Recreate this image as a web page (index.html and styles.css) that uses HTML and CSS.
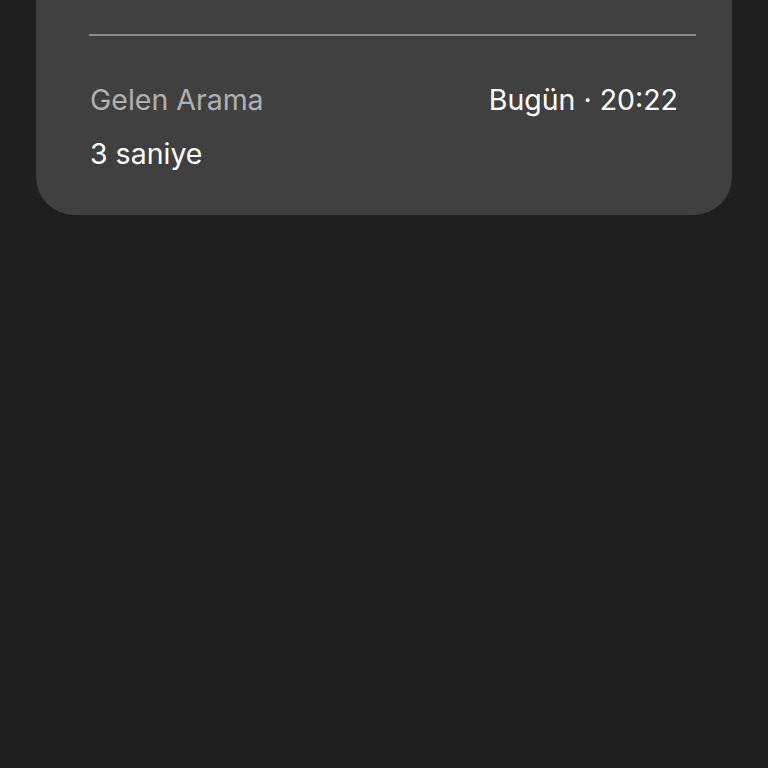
FILE: index.html
```html
<!DOCTYPE html>
<html lang="tr">
<head>
  <meta charset="UTF-8">
  <title>Arama Detayı</title>
  <meta name="viewport" content="width=device-width, initial-scale=1.0" />
  <link rel="stylesheet" href="styles.css">
</head>
<body>
  <div class="call-card">
    <div class="divider"></div>
    <div class="call-row">
      <span class="call-type">Gelen Arama</span>
      <span class="call-time">Bugün · 20:22</span>
    </div>
    <div class="call-duration">3 saniye</div>
  </div>
</body>
</html>
```

FILE: styles.css
```css
body {
  margin: 0;
  background-color: #1f1f1f;
  font-family: Inter, Roboto, "Liberation Sans", sans-serif;
  color: #ffffff;
  height: 768px;
}

.call-card {
  margin: 0 36px;
  height: 215px;
  box-sizing: border-box;
  background-color: #404040;
  border-radius: 0 0 38px 38px;
  padding: 34px 54px 0 54px;
}

.divider {
  height: 2px;
  background-color: #8c8c8c;
  margin-right: -18px;
  margin-left: -1px;
}

.call-row {
  display: flex;
  justify-content: space-between;
  align-items: baseline;
  margin-top: 46px;
  font-size: 28.5px;
  line-height: 36px;
}

.call-type {
  color: #b0b0b0;
}

.call-time {
  color: #ffffff;
}

.call-duration {
  margin-top: 18px;
  font-size: 28.5px;
  line-height: 36px;
}
```
